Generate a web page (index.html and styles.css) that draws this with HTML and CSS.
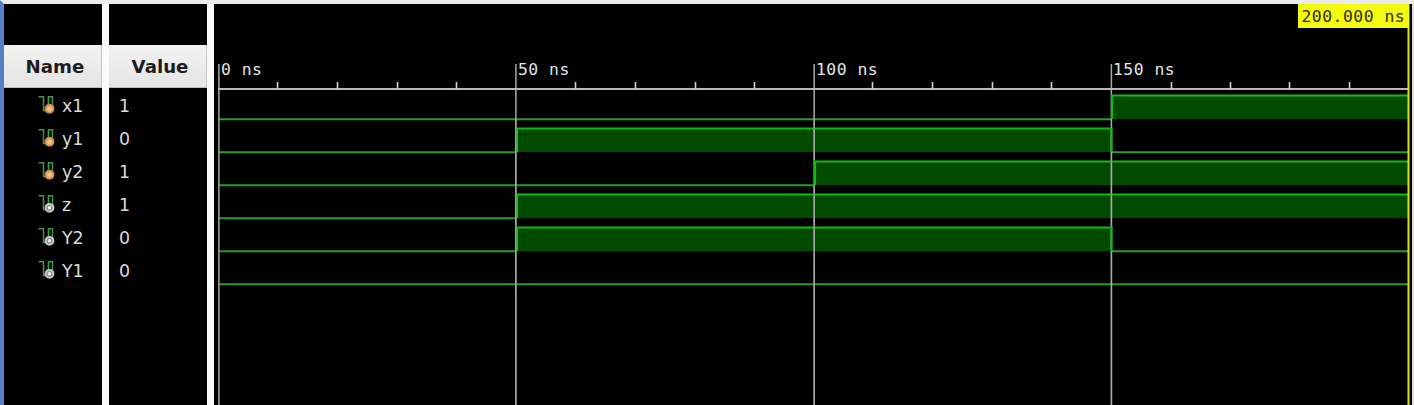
FILE: index.html
```html
<!DOCTYPE html>
<html lang="en">
<head>
<meta charset="utf-8">
<title>Waveform</title>
<link rel="stylesheet" href="styles.css">
</head>
<body>
<svg width="0" height="0" class="defs">
  <defs>
    <radialGradient id="orange"><stop offset="0" stop-color="#ffd9a0"/><stop offset=".5" stop-color="#f2ac66"/><stop offset="1" stop-color="#b87848"/></radialGradient>
    <symbol id="wave" viewBox="0 0 18 19"><path d="M.5 .8H5.5V14.5H8.5M10.5 14V.8H14.5V12" fill="none" stroke="#478f55" stroke-width="1.5"/><path d="M10.5 14V.8" stroke="#35a045" stroke-width="1.2"/></symbol>
    <symbol id="in" viewBox="0 0 18 19"><use href="#wave"/><circle cx="11.5" cy="12.8" r="5" fill="url(#orange)"/></symbol>
    <symbol id="out" viewBox="0 0 18 19"><use href="#wave"/><circle cx="11.5" cy="12.8" r="3.9" fill="#8c8c8c" stroke="#c6c6c6" stroke-width="2"/><circle cx="11.5" cy="12.8" r="1.7" fill="#f4f4f4"/></symbol>
  </defs>
</svg>
<main class="viewer">
  <section class="column names">
    <h2 class="heading">Name</h2>
    <div class="row"><svg class="icon"><use href="#in"/></svg>x1</div>
    <div class="row"><svg class="icon"><use href="#in"/></svg>y1</div>
    <div class="row"><svg class="icon"><use href="#in"/></svg>y2</div>
    <div class="row"><svg class="icon"><use href="#out"/></svg>z</div>
    <div class="row"><svg class="icon"><use href="#out"/></svg>Y2</div>
    <div class="row"><svg class="icon"><use href="#out"/></svg>Y1</div>
  </section>
  <section class="column values">
    <h2 class="heading">Value</h2>
    <div class="row">1</div>
    <div class="row">0</div>
    <div class="row">1</div>
    <div class="row">1</div>
    <div class="row">0</div>
    <div class="row">0</div>
  </section>
  <section class="plot">
    <svg class="chart" width="1198" height="401" viewBox="214 4 1198 401">
      <g class="fill">
        <path d="M1111 95H1408V119H1111zM516 128H1111V152H516zM814 161H1408V185H814zM516 194H1408V218H516zM516 227H1111V251H516z"/>
      </g>
      <path class="low" d="M219 119.2H1111M219 152.2H516M1111 152.2H1408M219 185.2H814M219 218.2H516M219 251.2H516M1111 251.2H1408M219 284.2H1408"/>
      <path class="grid" d="M218.9 64V405M515.9 64V405M814.2 64V405M1111.4 64V405"/>
      <path class="edge" d="M1112 119V95.5H1408M517 152V128.5H1111.5V152M815 185V161.5H1408M517 218V194.5H1408M517 251V227.5H1111.5V251"/>
      <path class="grid over" d="M814.2 120V160M814.2 186V405M1111.4 153V226M1111.4 252V405M515.9 120V405"/>
      <path class="axis" d="M218 89H1408"/>
      <path class="tick" d="M277.5 82V89M337.5 82V89M397.5 82V89M456.5 82V89M575.5 82V89M635.5 82V89M695.5 82V89M754.5 82V89M872.5 82V89M932.5 82V89M992.5 82V89M1051.5 82V89M1171.5 82V89M1230.5 82V89M1289.5 82V89M1349.5 82V89"/>
      <g class="label">
        <text x="221" y="74.5">0 ns</text>
        <text x="518" y="74.5">50 ns</text>
        <text x="816" y="74.5">100 ns</text>
        <text x="1113" y="74.5">150 ns</text>
      </g>
      <path class="cursor" d="M1408.5 4V405"/>
      <path class="flag" d="M1298 4H1409V28H1298z"/>
      <text class="time" x="1301.5" y="22">200.000 ns</text>
    </svg>
  </section>
</main>
</body>
</html>
```
FILE: styles.css
```css
* { box-sizing: border-box; }
body { margin: 0; background: #000; overflow: hidden; }
.defs { display: block; }
.viewer {
  display: grid;
  grid-template-columns: 98px 98px 1198px;
  column-gap: 7px;
  width: 1414px;
  height: 405px;
  border-top: 4px solid #ececec;
  border-left: 4px solid #5581c4;
  border-right: 2px solid #dedede;
  background: #fbfbfb;
}
.column {
  padding-top: 41px;
  background: #000;
  color: #dadada;
  font: 17.4px/31px "DejaVu Sans", sans-serif;
}
.heading {
  height: 43px;
  margin: 0 0 1px;
  padding-left: 5px;
  border-right: 1px solid #c5c5c5;
  border-bottom: 1px solid #bcbcbc;
  background: linear-gradient(#f2f2f2, #e5e5e5);
  color: #1c1c1c;
  font: bold 18.2px/43px "DejaVu Sans", sans-serif;
  text-align: center;
}
.row { display: flex; height: 33px; padding-top: 2px; align-items: center; }
.names .row { padding-left: 34px; }
.values .row { padding-left: 10px; }
.icon { width: 18px; height: 19px; margin: 0 6px 2px 0; }
.plot { overflow: hidden; background: #000; }
.chart { display: block; }
.fill { fill: #004b00; }
.low { fill: none; stroke: #2b9a2b; stroke-width: 1.9; }
.edge { fill: none; stroke: #14ba14; stroke-width: 2.2; }
.grid { stroke: #a8a8a8; stroke-width: 1.5; }
.over { opacity: .55; }
.axis { stroke: #b8b8b8; stroke-width: 1.8; }
.tick { stroke: #d0d0d0; stroke-width: 1.6; }
.label, .time { font: 16.4px "DejaVu Sans Mono", monospace; letter-spacing: .5px; }
.label { fill: #e4e4e4; }
.flag { fill: #f5fb10; }
.cursor { stroke: #dce52c; stroke-width: 2; }
.time { fill: #332c00; }
```
